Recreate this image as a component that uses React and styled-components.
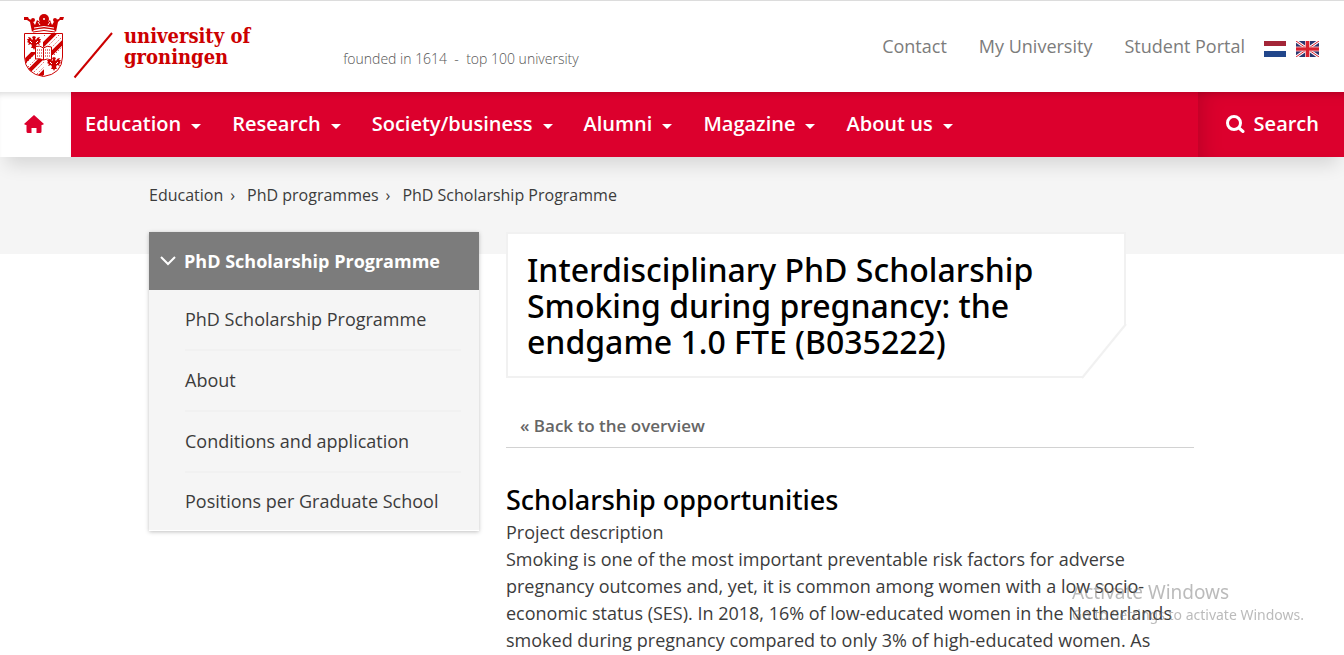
import React from "react";
import styled, { createGlobalStyle } from "styled-components";

const GlobalStyle = createGlobalStyle`
  body {
    margin: 0;
    background: #ffffff;
    color: #3c3c3c;
    font-family: "Open Sans", sans-serif;
    font-size: 18px;
    line-height: 27px;
  }

  a {
    color: inherit;
    text-decoration: none;
  }
`;

const List = styled.ul`
  list-style: none;
  margin: 0;
  padding: 0;
`;

const TopBar = styled.header`
  display: flex;
  box-sizing: border-box;
  height: 92px;
  padding: 0 25px 0 24px;
  border-top: 1px solid #dcdcdc;
`;

const LogoLink = styled.a`
  display: flex;
  color: #cc0000;
`;

const LogoMark = styled.svg`
  display: block;
  width: 92px;
  height: 66px;
  margin-top: 13px;
`;

const LogoText = styled.span`
  margin: 25px 0 0 8px;
  font-family: "DejaVu Serif Condensed", "DejaVu Serif", serif;
  font-size: 20px;
  font-weight: 700;
  line-height: 21px;
  white-space: nowrap;
`;

const Tagline = styled.p`
  margin: 48px 0 0 93px;
  color: #555555;
  font-size: 14px;
  font-weight: 300;
  line-height: 20px;
  white-space: pre;
`;

const TopLinks = styled(List)`
  display: flex;
  gap: 32px;
  margin: 32px 0 0 auto;
  color: #7c7c7c;
`;

const Languages = styled.div`
  display: flex;
  gap: 10px;
  margin: 40px 0 0 19px;
`;

const Flag = styled.svg`
  display: block;
  height: 16px;
`;

const MainNav = styled.nav`
  position: relative;
  display: flex;
  height: 65px;
  background: #dc002d;
  color: #ffffff;
  font-size: 20px;
  font-weight: 600;
  box-shadow: inset 0 6px 6px -4px rgba(0, 0, 0, 0.15),
    0 14px 18px -6px rgba(0, 0, 0, 0.12);
`;

const HomeLink = styled.a`
  display: flex;
  align-items: center;
  justify-content: center;
  width: 71px;
  padding: 0 3px 1px 0;
  box-sizing: border-box;
  background: #ffffff;
  color: #dc002d;
  box-shadow: inset 0 6px 6px -4px rgba(0, 0, 0, 0.15);
`;

const NavList = styled(List)`
  display: flex;
  align-items: center;
  gap: 31px;
  padding: 0 0 2px 14px;
`;

const NavLink = styled.a`
  display: flex;
  align-items: center;
  gap: 10px;
`;

const Caret = styled.span`
  margin-top: 5px;
  border: 5px solid transparent;
  border-top-color: #ffffff;
  border-bottom: 0;
`;

const SearchButton = styled.button`
  display: flex;
  align-items: center;
  gap: 9px;
  margin-left: auto;
  padding: 0 25px 2px 28px;
  border: 0;
  background: transparent;
  color: inherit;
  font: inherit;
  box-shadow: inset 14px 4px 24px -14px rgba(0, 0, 0, 0.2);
`;

const Content = styled.div`
  background: linear-gradient(#f5f5f5, #f5f5f5) 0 0 / 100% 97px no-repeat;
`;

const Container = styled.div`
  max-width: 1046px;
  margin: 0 auto;
`;

const Breadcrumbs = styled(List)`
  display: flex;
  padding: 27px 0 25px;
  font-size: 16px;
  line-height: 23px;
`;

const Crumb = styled.li`
  & + &::before {
    content: "›";
    margin: 0 12px 0 7px;
  }
`;

const Columns = styled.div`
  display: grid;
  grid-template-columns: 330px minmax(0, 688px);
  gap: 27px;
  align-items: start;
`;

const SideMenu = styled.nav`
  background: #f5f5f5;
  border-bottom: 1px solid #ffffff;
  box-shadow: 0 1px 4px rgba(0, 0, 0, 0.25);
`;

const SideTitle = styled.a`
  display: flex;
  align-items: center;
  gap: 8px;
  height: 58px;
  padding-left: 11px;
  background: #7c7c7c;
  color: #ffffff;
  font-weight: 700;
`;

const SideList = styled(List)`
  padding: 0 18px 0 36px;
`;

const SideItem = styled.li`
  padding: 16px 0;

  & + & {
    border-top: 2px solid #f1f1f1;
  }

  &:last-child {
    padding: 15px 0;
  }
`;

const TitleBox = styled.div`
  position: relative;
  box-sizing: border-box;
  max-width: 620px;
  padding: 18px 60px 16px 19px;
  border: 2px solid #f1f1f1;
  background: #ffffff;
`;

const Title = styled.h1`
  margin: 0;
  color: #000000;
  font-family: "Noto Sans", "Open Sans", sans-serif;
  font-size: 32px;
  font-weight: 500;
  line-height: 36px;
`;

const Corner = styled.svg`
  position: absolute;
  right: -3px;
  bottom: -3px;
`;

const BackLink = styled.a`
  display: block;
  margin: 34px 0 35px;
  padding: 0 14px 8px;
  border-bottom: 1px solid #d2d2d2;
  color: #666666;
  font-size: 17px;
  font-weight: 600;
`;

const SectionTitle = styled.h2`
  margin: 0 0 3px;
  color: #000000;
  font-family: "Noto Sans", "Open Sans", sans-serif;
  font-size: 27px;
  font-weight: 500;
  line-height: 33px;
`;

const Text = styled.p`
  margin: 0;
`;

const Watermark = styled.div`
  position: fixed;
  right: 40px;
  bottom: 29px;
  color: rgba(120, 120, 120, 0.5);
  font-family: "Noto Sans", "Open Sans", sans-serif;
  font-size: 14px;
  line-height: 22px;
  pointer-events: none;
`;

const WatermarkTitle = styled.div`
  font-size: 19px;
  line-height: 24px;
`;

const navItems = [
  "Education",
  "Research",
  "Society/business",
  "Alumni",
  "Magazine",
  "About us",
];

const sideItems = [
  "PhD Scholarship Programme",
  "About",
  "Conditions and application",
  "Positions per Graduate School",
];

const Eagle = ({ x, y }) => (
  <g transform={`translate(${x} ${y})`}>
    <path
      d="M6 0L8 1 7 3 8 4Q9 1 12 1L11 3H13L12 5 13 6 11 7 12 9 9 8 8 10 9 12 7 12 6 14 5 12 3 12 4 10 3 8 0 9 1 7 -1 6 0 5 -1 3H1L0 1Q3 1 4 4L5 3 4 1Z"
      fill="currentColor"
    />
    <path d="M2 5L4 7M10 5L8 7" stroke="#fff" />
  </g>
);

const Logo = () => (
  <LogoMark viewBox="0 0 92 66" fill="none" aria-hidden="true">
    <defs>
      <clipPath id="shield">
        <path d="M1 20H38V42Q38 60 19.500 62Q1 60 1 42Z" />
      </clipPath>
      <clipPath id="bands">
        <path d="M19 19H39V41H19ZM0 38H20V63H0Z" />
      </clipPath>
    </defs>
    <g fill="currentColor">
      <path d="M8 18L6 8 3 6 0 6 0 3 4 3 5 5 8 6 11 11 13 6 16 8 18 5 16 3 18 3 18 1 21 1 21 3 23 3 22 6 24 8 26 6 28 11 31 6 35 5 36 3 40 3 39 6 36 6 34 8 32 18 30 16Q20 13 10 16Z" />
      <circle cx="20" cy="5" r="5" />
      <circle cx="9" cy="6" r="2" />
      <circle cx="31" cy="6" r="2" />
    </g>
    <circle cx="20" cy="5" r="1" fill="#fff" />
    <path d="M10 14Q20 11 30 14M14 8l2 3M26 8l-2 3" stroke="#fff" />
    <path d="M9 18Q20 15 31 18" stroke="currentColor" />
    <g clipPath="url(#shield)">
      <g clipPath="url(#bands)">
        <g stroke="currentColor" strokeWidth="4">
          <path d="M14 36L36 14M24 43L46 21M-4 52L18 30M0 62L26 36M11 67L33 45" />
        </g>
        <g stroke="currentColor" strokeDasharray="1 2">
          <path d="M18 24L24 18M17 39L40 16M21 40L42 19M28 43L42 29M0 51L18 33M0 57L18 39M4 64L24 44M7 66L24 49" />
        </g>
      </g>
      <Eagle x={4} y={22} />
      <Eagle x={24} y={43} />
    </g>
    <path d="M.5 19.500H38.500V43Q38 60 19.500 62.500Q1 60 .5 43Z" stroke="currentColor" />
    <path d="M11.500 32.500Q16 31 19.500 34Q23 31 27.500 33V46Q23 44 19.500 46Q16 44 11.500 45Z" fill="#fff" stroke="currentColor" />
    <path d="M19.500 34V46" stroke="currentColor" />
    <path d="M13 36h5M13 39h5M13 42h5M21 36h5M21 39h5M21 42h5" stroke="currentColor" strokeDasharray="1 1" />
    <path d="M50.500 63.500L88 19" stroke="currentColor" strokeWidth="2" />
  </LogoMark>
);

const HomeIcon = () => (
  <svg width="20" height="18" viewBox="0 0 20 18" fill="currentColor" aria-hidden="true">
    <path d="M10 0L20 9Q19 10 17.500 10V16.500Q17.500 18 16 18H12.500V13H7.500V18H4Q2.500 18 2.500 16.500V10Q1 10 0 9Z" />
  </svg>
);

const SearchIcon = () => (
  <svg width="19" height="19" viewBox="0 0 19 19" fill="none" stroke="currentColor" strokeWidth="3" strokeLinecap="round" aria-hidden="true">
    <circle cx="8" cy="9" r="6.500" />
    <path d="M13 14L17 17.500" />
  </svg>
);

const DutchFlag = () => (
  <Flag width="22" viewBox="0 0 22 16" role="img" aria-label="Nederlands">
    <path d="M0 0H22V16H0Z" fill="#fff" />
    <path d="M0 0H22V5H0Z" fill="#a32638" />
    <path d="M0 10H22V16H0Z" fill="#21468b" />
  </Flag>
);

const BritishFlag = () => (
  <Flag width="23" viewBox="0 0 23 16" role="img" aria-label="English">
    <path d="M0 0H23V16H0Z" fill="#2b3670" />
    <path d="M0 0L23 16M23 0L0 16" stroke="#fff" strokeWidth="3" />
    <path d="M0 0L23 16M23 0L0 16" stroke="#d9202e" strokeWidth="1" />
    <path d="M11.500 0V16M0 8H23" stroke="#f0a9b0" strokeWidth="5" />
    <path d="M11.500 0V16M0 8H23" stroke="#d9202e" strokeWidth="3" />
  </Flag>
);

const App = () => {
  return (
    <>
      <GlobalStyle />
      <TopBar>
        <LogoLink href="#">
          <Logo />
          <LogoText>
            university of
            <br />
            groningen
          </LogoText>
        </LogoLink>
        <Tagline>{"founded in 1614  -  top 100 university"}</Tagline>
        <TopLinks>
          {["Contact", "My University", "Student Portal"].map((label) => (
            <li key={label}>
              <a href="#">{label}</a>
            </li>
          ))}
        </TopLinks>
        <Languages>
          <a href="#">
            <DutchFlag />
          </a>
          <a href="#">
            <BritishFlag />
          </a>
        </Languages>
      </TopBar>
      <MainNav>
        <HomeLink href="#" aria-label="Home">
          <HomeIcon />
        </HomeLink>
        <NavList>
          {navItems.map((label) => (
            <li key={label}>
              <NavLink href="#">
                {label}
                <Caret />
              </NavLink>
            </li>
          ))}
        </NavList>
        <SearchButton type="button">
          <SearchIcon />
          Search
        </SearchButton>
      </MainNav>
      <Content>
        <Container>
          <Breadcrumbs>
            {["Education", "PhD programmes", "PhD Scholarship Programme"].map(
              (label) => (
                <Crumb key={label}>
                  <a href="#">{label}</a>
                </Crumb>
              )
            )}
          </Breadcrumbs>
          <Columns>
            <SideMenu>
              <SideTitle href="#">
                <svg width="16" height="10" viewBox="0 0 16 10" fill="none" stroke="currentColor" strokeWidth="2" aria-hidden="true">
                  <path d="M1 1L8 8L15 1" />
                </svg>
                PhD Scholarship Programme
              </SideTitle>
              <SideList>
                {sideItems.map((label) => (
                  <SideItem key={label}>
                    <a href="#">{label}</a>
                  </SideItem>
                ))}
              </SideList>
            </SideMenu>
            <main>
              <TitleBox>
                <Title>
                  Interdisciplinary PhD Scholarship Smoking during pregnancy:
                  the endgame 1.0 FTE (B035222)
                </Title>
                <Corner width="46" height="56" viewBox="0 0 46 56" aria-hidden="true">
                  <path d="M2 55L45 2V56H2Z" fill="#fff" />
                  <path d="M1 55L45 1" stroke="#f1f1f1" strokeWidth="2" />
                </Corner>
              </TitleBox>
              <BackLink href="#">« Back to the overview</BackLink>
              <SectionTitle>Scholarship opportunities</SectionTitle>
              <Text>Project description</Text>
              <Text>
                Smoking is one of the most important preventable risk factors
                for adverse pregnancy outcomes and, yet, it is common among
                women with a low socio-economic status (SES). In 2018, 16% of
                low-educated women in the Netherlands smoked during pregnancy
                compared to only 3% of high-educated women. As
              </Text>
            </main>
          </Columns>
        </Container>
      </Content>
      <Watermark>
        <WatermarkTitle>Activate Windows</WatermarkTitle>
        Go to Settings to activate Windows.
      </Watermark>
    </>
  );
};

export default App;
